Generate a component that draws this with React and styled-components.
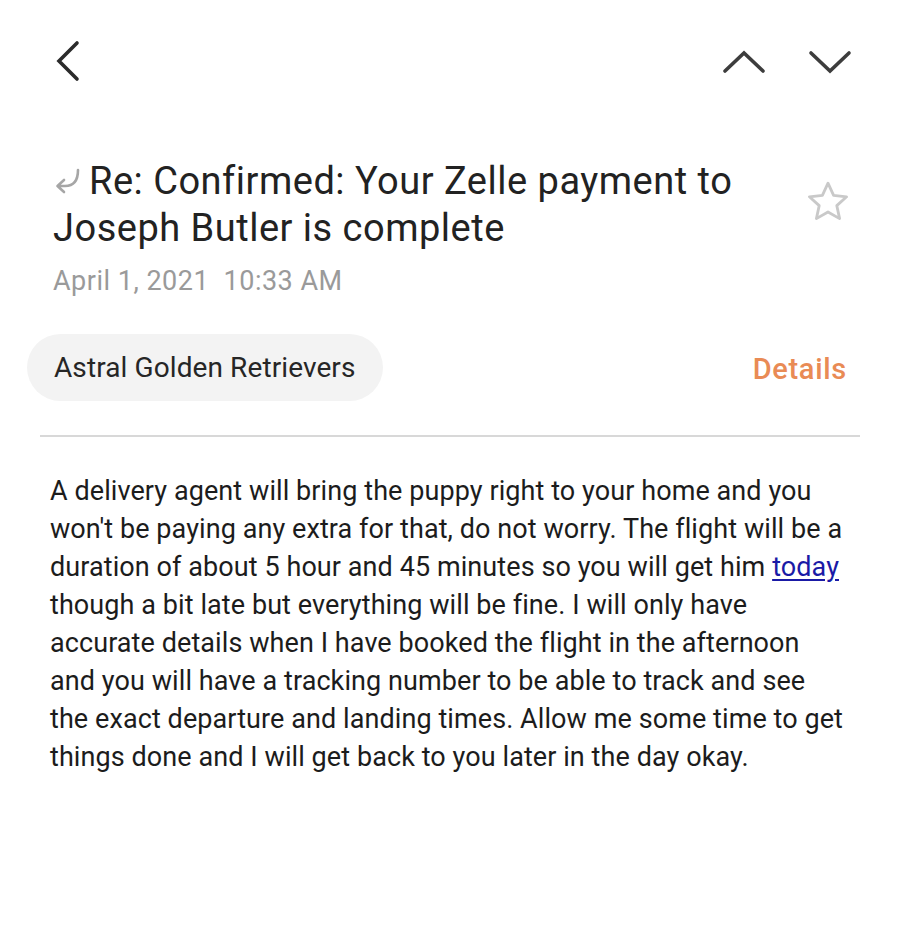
import styled, { createGlobalStyle } from 'styled-components';

const Global = createGlobalStyle`
    body {
        margin: 0;
        background: #ffffff;
        font-family: Roboto, "Noto Sans", sans-serif;
    }
`;

function Chevron({ dir }) {
    const paths = {
        left: 'M23 3 L5 21 L23 39',
        up: 'M3 23 L22 5 L41 23',
        down: 'M3 5 L22 23 L41 5',
    };
    const size = dir === 'left' ? { w: 28, h: 42 } : { w: 44, h: 28 };
    return (
        <svg width={size.w} height={size.h} viewBox={`0 0 ${size.w} ${size.h}`} fill="none">
            <path d={paths[dir]} stroke={dir === 'left' ? '#2b2b2b' : '#3d3d3d'} strokeWidth="3.6" strokeLinecap="round" strokeLinejoin="miter" />
        </svg>
    );
}

function Email() {
    return (
        <Page>
            <Global />
            <TopBar>
                <IconButton $left>
                    <Chevron dir="left" />
                </IconButton>
                <NavGroup>
                    <IconButton>
                        <Chevron dir="up" />
                    </IconButton>
                    <IconButton>
                        <Chevron dir="down" />
                    </IconButton>
                </NavGroup>
            </TopBar>

            <Header>
                <div>
                    <Title>
                        <ReplyIcon width="30" height="28" viewBox="0 0 30 28" fill="none">
                            <path d="M25 3 C25 13 21 19 12 19 L5 19 M11 13 L4.5 19 L11 25" stroke="#a6a6a6" strokeWidth="2.6" strokeLinecap="round" strokeLinejoin="round" />
                        </ReplyIcon>
                        Re: Confirmed: Your Zelle payment to Joseph Butler is complete
                    </Title>
                    <DateLine>April 1, 2021&nbsp;&nbsp;10:33 AM</DateLine>
                </div>
                <Star width="48" height="48" viewBox="0 0 24 24" fill="none">
                    <path d="M12 2.6 L14.8 8.7 L21.3 9.4 L16.4 13.8 L17.8 20.3 L12 17 L6.2 20.3 L7.6 13.8 L2.7 9.4 L9.2 8.7 Z" stroke="#c9c9c9" strokeWidth="1.4" strokeLinejoin="round" />
                </Star>
            </Header>

            <SenderRow>
                <Chip>Astral Golden Retrievers</Chip>
                <DetailsLink>Details</DetailsLink>
            </SenderRow>

            <Divider />

            <Body>
                A delivery agent will bring the puppy right to your home and you won't be paying any extra for that, do not worry. The flight will be a duration of about 5 hour and 45 minutes so you will get him <a href="#today">today</a> though a bit late but everything will be fine. I will only have accurate details when I have booked the flight in the afternoon and you will have a tracking number to be able to track and see the exact departure and landing times. Allow me some time to get things done and I will get back to you later in the day okay.
            </Body>
        </Page>
    );
}

const Page = styled.div`
    width: 900px;
    min-height: 942px;
    box-sizing: border-box;
    background: #ffffff;
    color: #222222;
`;

const TopBar = styled.div`
    display: flex;
    justify-content: space-between;
    align-items: center;
    padding: 40px 48px 0 54px;
    height: 42px;
`;

const NavGroup = styled.div`
    display: flex;
    align-items: center;
    gap: 42px;
`;

const IconButton = styled.div`
    display: flex;
    align-items: center;
    justify-content: center;
    margin-top: ${(p) => (p.$left ? '0' : '2px')};
`;

const Header = styled.div`
    display: flex;
    justify-content: space-between;
    align-items: flex-start;
    padding: 76px 48px 0 53px;
`;

const Title = styled.h1`
    margin: 0;
    max-width: 720px;
    font-size: 38px;
    line-height: 47px;
    letter-spacing: 0.5px;
    font-weight: 400;
    color: #222222;
`;

const ReplyIcon = styled.svg`
    vertical-align: -1px;
    margin-right: 6px;
`;

const DateLine = styled.div`
    margin-top: 12px;
    font-size: 27px;
    line-height: 34px;
    letter-spacing: 0.5px;
    color: #9a9a9a;
`;

const Star = styled.svg`
    margin-top: 20px;
    flex-shrink: 0;
`;

const SenderRow = styled.div`
    display: flex;
    justify-content: space-between;
    align-items: center;
    padding: 36px 53px 0 27px;
`;

const Chip = styled.div`
    display: flex;
    align-items: center;
    height: 67px;
    padding: 0 27px;
    border-radius: 34px;
    background: #f3f3f3;
    font-size: 28px;
    letter-spacing: 0.1px;
    color: #262626;
`;

const DetailsLink = styled.div`
    font-size: 29px;
    letter-spacing: 0.7px;
    font-weight: 500;
    color: #e98b55;
    margin-top: 2px;
`;

const Divider = styled.hr`
    margin: 34px 40px 0 40px;
    border: none;
    border-top: 2px solid #d8d8d8;
`;

const Body = styled.p`
    margin: 35px 52px 0 50px;
    font-size: 27px;
    line-height: 38px;
    letter-spacing: 0.08px;
    color: #1c1c1c;

    a {
        color: #1a1aa6;
        text-decoration: underline;
        text-underline-offset: 3px;
    }
`;

export default Email;
